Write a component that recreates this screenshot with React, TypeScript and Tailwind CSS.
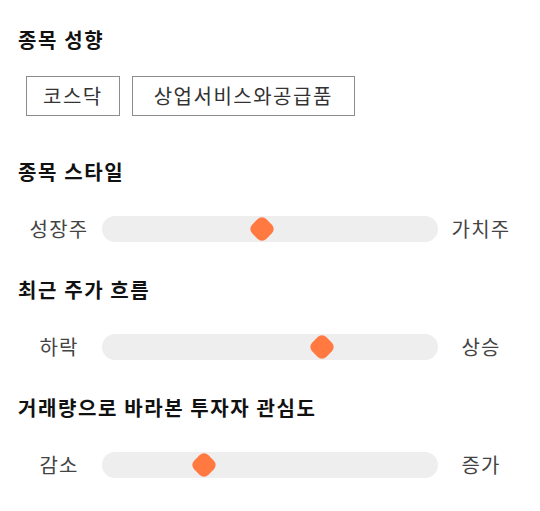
const FONT = "font-['Noto_Sans_CJK_KR','Noto_Sans',sans-serif]";

type SliderRowProps = {
  left: string;
  right: string;
  pos: number; // thumb centre, px from track start
};

function SliderRow({ left, right, pos }: SliderRowProps) {
  return (
    <div className="flex h-10 items-center gap-[2px]">
      <div className="w-[82px] text-center text-[20px] tracking-[1.2px] text-[#444]">{left}</div>
      <div className="relative h-[26px] flex-1 rounded-full bg-[#eeeeee]">
        <div
          className="absolute top-1/2 h-5 w-5 -translate-x-1/2 -translate-y-1/2 rotate-45 rounded-[6px] bg-[#ff7940]"
          style={{ left: pos }}
        />
      </div>
      <div className="w-[82px] text-center text-[20px] tracking-[1.2px] text-[#444]">{right}</div>
    </div>
  );
}

function Heading({ children }: { children: React.ReactNode }) {
  return <h2 className="h-7 text-[20px] leading-7 font-bold tracking-[1.6px] text-[#111]">{children}</h2>;
}

export default function App() {
  return (
    <div className={`${FONT} min-h-[511px] w-[540px] bg-white px-[18px] pt-[26px]`}>
      {/* 종목 성향 */}
      <Heading>종목 성향</Heading>
      <div className="mt-[22px] ml-2 flex gap-[12px]">
        <button className="h-10 border border-[#8c8c8c] px-4 text-[20px] tracking-[1.5px] text-[#333]">코스닥</button>
        <button className="h-10 border border-[#8c8c8c] px-[21px] text-[20px] tracking-[1.5px] text-[#333]">상업서비스와공급품</button>
      </div>

      <div className="mt-[42px]">
        <Heading>종목 스타일</Heading>
        <div className="mt-[23px]">
          <SliderRow left="성장주" right="가치주" pos={160} />
        </div>
      </div>

      <div className="mt-[27px]">
        <Heading>최근 주가 흐름</Heading>
        <div className="mt-[23px]">
          <SliderRow left="하락" right="상승" pos={220} />
        </div>
      </div>

      <div className="mt-[27px]">
        <Heading>거래량으로 바라본 투자자 관심도</Heading>
        <div className="mt-[23px]">
          <SliderRow left="감소" right="증가" pos={102} />
        </div>
      </div>
    </div>
  );
}
